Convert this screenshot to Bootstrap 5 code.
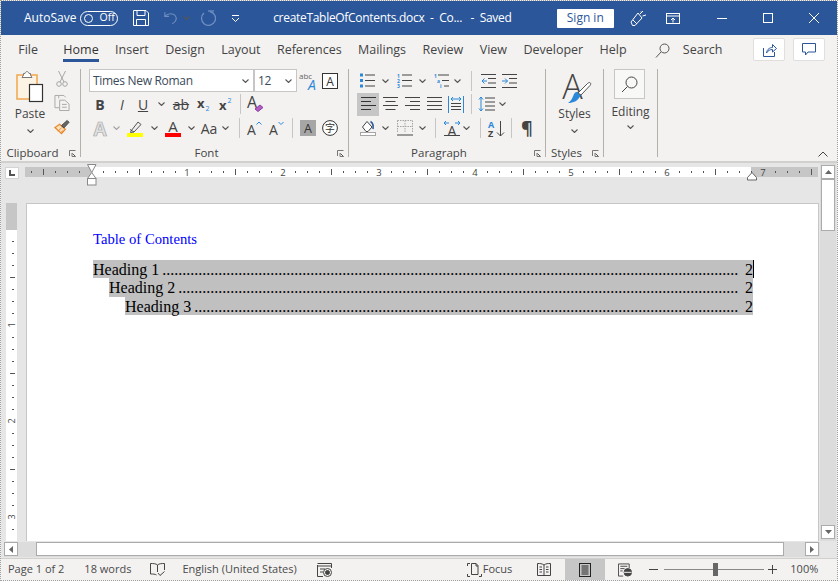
<!DOCTYPE html>
<html lang="en">

<head>
    <meta charset="UTF-8">
    <meta name="viewport" content="width=device-width, initial-scale=1.0">
    <title>createTableOfContents.docx - Word</title>
    <link href="https://cdn.jsdelivr.net/npm/bootstrap@5.3.2/dist/css/bootstrap.min.css" rel="stylesheet">
    <style>
        body {
            background: #f3f2f1;
            font-family: "Open Sans", "Noto Sans", sans-serif;
            font-size: 12px;
            color: #444;
        }

        .wd-app {
            height: 100vh;
            border: 1px dotted #a0a0a0;
            overflow: hidden;
        }

        /* fixed width cells, icons are centred inside */
        .rc {
            display: flex;
            align-items: center;
            justify-content: center;
            flex: none;
        }

        .w6 { width: 6px; } .w7 { width: 7px; } .w8 { width: 8px; } .w9 { width: 9px; } .w10 { width: 10px; }
        .w11 { width: 11px; } .w12 { width: 12px; } .w14 { width: 14px; } .w15 { width: 15px; } .w16 { width: 16px; }
        .w17 { width: 17px; } .w18 { width: 18px; } .w20 { width: 20px; } .w22 { width: 22px; } .w24 { width: 24px; }
        .w26 { width: 26px; } .w27 { width: 27px; } .w28 { width: 28px; } .w30 { width: 30px; } .w46 { width: 46px; }
        .w49 { width: 49px; }

        .wd-title {
            height: 34px;
            background: #2b579a;
            color: #fff;
            flex: none;
            padding-left: 23px;
            font-size: 12px;
        }

        .wd-autosave { width: 57px; }

        .wd-toggle {
            width: 38px;
            height: 15px;
            border: 1.5px solid #fff;
            border-radius: 8px;
            font-size: 10.5px;
            padding-left: 3px;
            gap: 6px;
        }

        .wd-toggle i {
            width: 9px;
            height: 9px;
            border: 1.5px solid #fff;
            border-radius: 50%;
        }

        .wd-docname {
            width: 286px;
            margin-left: 25px;
            white-space: pre;
            letter-spacing: -.3px;
        }

        .wd-signin {
            width: 58px;
            height: 19px;
            background: #fff;
            color: #2b579a;
            font-size: 12px;
            border-radius: 1px;
        }

        .wd-tabs {
            height: 27px;
            flex: none;
            padding-left: 9px;
            padding-right: 4px;
        }

        .wd-tabs .nav {
            align-self: stretch;
        }

        .wd-tabs .nav-link {
            padding: 3px 8.2px 0;
            color: #444;
            font-size: 12.5px;
            position: relative;
            line-height: 24px;
            height: 27px;
        }

        .wd-tabs .nav-link.active {
            color: #333;
            font-weight: 500;
        }

        .wd-tabs .nav-link.active::after {
            content: "";
            position: absolute;
            left: 8px;
            right: 8px;
            bottom: 0;
            height: 3px;
            background: #2b579a;
        }

        .wd-hometab { margin-left: 9px; }

        .wd-search {
            margin-left: 20px;
            margin-top: 3px;
            gap: 13px;
            font-size: 12.5px;
        }

        .wd-iconbtn {
            width: 32px;
            height: 23px;
            margin-top: 2px;
            background: #fff;
            border: 1px solid #e1dfdd;
            border-radius: 2px;
        }

        .wd-ribbon {
            height: 101px;
            flex: none;
            border-bottom: 2px solid #d2d0ce;
        }

        .wd-ribbon svg {
            overflow: visible;
        }

        .wd-group {
            height: 88px;
            margin-top: 7px;
            border-right: 1px solid #b3b0ad;
            flex: none;
        }

        .wd-clip { width: 80px; }
        .wd-font { width: 268px; }
        .wd-para { width: 197px; }
        .wd-styles { width: 58px; }
        .wd-edit { width: 54px; }

        .wd-grow {
            flex: 1 1 auto;
            min-height: 0;
        }

        .wd-pad { padding-left: 8px; }

        .wd-row { height: 24px; }
        .wd-row.wd-first { height: 23px; }

        .wd-glabel {
            height: 15px;
            margin-bottom: -4px;
            font-size: 11.5px;
            line-height: 14px;
            color: #444;
        }

        .wd-big { line-height: 14px; }

        .wd-pasteicon { margin: 2px 0 4px; }
        .wd-smalltools { padding-top: 2px; }
        .wd-stylesicon { margin: 4px 0 2px; }
        .wd-gap6 { margin-top: 6px; }

        .wd-fmt { font-size: 14px; }
        .wd-pilcrow { font-size: 18px; font-weight: 700; }

        .wd-combo {
            height: 23px;
            background: #fff;
            border: 1px solid #c8c6c4;
            font-size: 12px;
            letter-spacing: -.3px;
            color: #3b4a5a;
            padding: 0 4px 0 3px;
            flex: none;
            justify-content: space-between;
        }

        .wd-combo-name { width: 165px; }
        .wd-combo-size { width: 43px; }

        .wd-sel {
            background: #c6c6c6;
            height: 23px;
        }

        .wd-vsep {
            width: 1px;
            height: 20px;
            background: #c8c6c4;
        }

        .wd-findbox {
            width: 31px;
            height: 30px;
            border: 1px solid #c8c6c4;
            background: #f8f8f7;
            margin-left: 10px;
        }

        .wd-collapse {
            margin-left: 160px;
            margin-top: 89px;
        }

        .wd-doc {
            background: #e6e6e6;
            height: 395px;
            flex: none;
        }

        .wd-docmain {
            width: 819px;
            flex: none;
        }

        .wd-rulerrow {
            height: 40px;
            flex: none;
            padding: 4px 0 0 4px;
        }

        .wd-corner {
            width: 14px;
            height: 12px;
            background: #fff;
            border: 1px solid #d4d4d4;
            margin-right: 6px;
        }

        .wd-pagerow {
            flex: 1 1 auto;
            min-height: 0;
            overflow: hidden;
            padding-left: 5px;
            padding-right: 1px;
        }

        .wd-vruler {
            width: 11px;
            margin-top: -1px;
            flex: none;
        }

        .wd-page {
            margin-left: 9px;
            flex: 1 1 0;
            min-width: 0;
            background: #fff;
            border: 1px solid #c6c6c6;
            border-bottom: 0;
            padding: 26px 65px 0 66px;
            font-family: "Liberation Serif", serif;
            font-size: 16px;
            color: #000;
        }

        .wd-toctitle {
            color: #0000ff;
            font-size: 14.67px;
            line-height: 18px;
            margin-bottom: 12px;
        }

        .wd-tocline {
            height: 18.33px;
            line-height: 20px;
            background: #c0c0c0;
            white-space: nowrap;
        }

        .wd-lvl2 { margin-left: 16px; }
        .wd-lvl3 { margin-left: 32px; }

        .wd-dots {
            margin-left: 3px;
        }

        .wd-pageno {
            margin-left: auto;
        }

        .wd-caret {
            box-shadow: 1px 0 #000;
        }

        .wd-hscroll {
            height: 15px;
            flex: none;
            margin: 1px 0 1px 3px;
            width: 816px;
            background: #dcdcdc;
        }

        .wd-sbtn {
            width: 14px;
            height: 14px;
            background: #fff;
            border: 1px solid #ababab;
            flex: none;
        }

        .wd-hthumb {
            width: 748px;
            height: 14px;
            background: #fff;
            border: 1px solid #ababab;
            margin: 0 21px 0 18px;
        }

        .wd-vscroll {
            width: 16px;
            height: 378px;
            flex: none;
            background: #dcdcdc;
            padding: 2px 1px;
        }

        .wd-vthumb {
            width: 14px;
            height: 52px;
            background: #fff;
            border: 1px solid #ababab;
        }

        .wd-status {
            height: 22px;
            flex: none;
            padding-left: 7px;
            font-size: 11px;
            border-top: 1px solid #d2d0ce;
            color: #4a4a4a;
        }

        .wd-words { margin-left: 20px; }
        .wd-book { margin-left: 19px; }
        .wd-lang { margin-left: 17px; }
        .wd-macro { margin-left: 20px; }
        .wd-focus { margin-left: 135px; gap: 1px; }
        .wd-views { margin-left: 18px; }

        .wd-printcell {
            width: 40px;
            margin-left: 7px;
            background: #c6c6c6;
        }

        .wd-webview { margin-left: 13px; }
        .wd-minus { margin-left: 17px; }

        .wd-slider {
            width: 100px;
            height: 1px;
            background: #8a8886;
            margin: 0 4px 0 6px;
        }

        .wd-knob {
            width: 5px;
            height: 13px;
            margin-left: 3px;
            background: #666;
        }

        .wd-zoom { margin-left: 13px; }
    </style>
</head>

<body>
    <!-- shared glyphs -->
    <svg width="0" height="0" class="d-block">
        <defs>
            <symbol id="chev" viewBox="0 0 7 4"><path d="M.5.5 3.5 3.5 6.5.5" fill="none" stroke="#555" stroke-width="1.1"/></symbol>
            <symbol id="launch" viewBox="0 0 7 7"><path d="M.5 6V.5H6.5M6.5 6.5H3V3" fill="none" stroke="#777"/><path d="M3.5 3.5 6.5 6.5" stroke="#555"/></symbol>
            <pattern id="hticks" width="96" height="10" patternUnits="userSpaceOnUse" patternTransform="translate(66 0)">
                <rect x="12" y="4" width="1" height="2" fill="#555"/><rect x="24" y="4" width="1" height="2" fill="#555"/><rect x="36" y="4" width="1" height="2" fill="#555"/>
                <rect x="48" y="2" width="1" height="6" fill="#555"/>
                <rect x="60" y="4" width="1" height="2" fill="#555"/><rect x="72" y="4" width="1" height="2" fill="#555"/><rect x="84" y="4" width="1" height="2" fill="#555"/>
            </pattern>
            <pattern id="vticks" width="11" height="96" patternUnits="userSpaceOnUse" patternTransform="translate(0 27)">
                <rect x="6" y="12" width="2" height="1" fill="#555"/><rect x="6" y="24" width="2" height="1" fill="#555"/><rect x="6" y="36" width="2" height="1" fill="#555"/>
                <rect x="4" y="48" width="5" height="1" fill="#555"/>
                <rect x="6" y="60" width="2" height="1" fill="#555"/><rect x="6" y="72" width="2" height="1" fill="#555"/><rect x="6" y="84" width="2" height="1" fill="#555"/>
            </pattern>
        </defs>
    </svg>

    <div class="wd-app d-flex flex-column">
        <!-- title bar -->
        <div class="wd-title d-flex align-items-center">
            <span class="wd-autosave">AutoSave</span>
            <span class="wd-toggle d-flex align-items-center flex-none"><i></i>Off</span>
            <span class="rc w46">
                <svg width="16" height="16" viewBox="0 0 16 16" fill="none" stroke="#fff"><path d="M.5.5H13L15.5 3V15.5H.5Z"/><path d="M4 .5V5.5H12V.5M3.5 15.5V9.5H12.5V15.5"/></svg>
            </span>
            <span class="rc w14">
                <svg width="17" height="16" viewBox="0 0 17 16" fill="none" stroke="#6f8fc0" stroke-width="1.3"><path d="M1 1V6H6"/><path d="M1.5 5.5C5 2 11 2 13.5 5S15 12.5 10 15"/></svg>
            </span>
            <span class="rc w16"><svg width="7" height="4"><use href="#chev"/></svg></span>
            <span class="rc w28">
                <svg width="16" height="16" viewBox="0 0 16 16" fill="none" stroke="#6f8fc0" stroke-width="1.3"><path d="M10 1.5A7 7 0 1 1 4 3"/><path d="M8 1H14"/></svg>
            </span>
            <span class="rc w26">
                <svg width="9" height="7" viewBox="0 0 9 7" fill="none" stroke="#fff"><path d="M1 .5H8"/><path d="M1 3 4.5 6.5 8 3"/></svg>
            </span>
            <span class="wd-docname">createTableOfContents.docx  -  Co...   -  Saved</span>
            <span class="wd-signin d-flex align-items-center justify-content-center">Sign in</span>
            <span class="rc w49">
                <svg width="17" height="17" viewBox="0 0 17 17" fill="none" stroke="#fff"><path d="M1 12 8 3 12 8 5 15.5H2.5Z"/><path d="M3 10 7 14M10 4 13 1M12.5 6 16 5M11 1.5 11.5 3"/></svg>
            </span>
            <span class="rc w20">
                <svg width="14" height="11" viewBox="0 0 14 11" fill="none" stroke="#fff"><rect x=".5" y=".5" width="13" height="10"/><path d="M.5 3H13.5M7 9.5V5M5 7 7 5 9 7"/></svg>
            </span>
            <span class="rc w46 ms-3">
                <svg width="10" height="10" viewBox="0 0 10 10" stroke="#fff"><path d="M0 5.5H10"/></svg>
            </span>
            <span class="rc w46">
                <svg width="10" height="10" viewBox="0 0 10 10" fill="none" stroke="#fff"><rect x=".5" y=".5" width="9" height="9"/></svg>
            </span>
            <span class="rc w46">
                <svg width="10" height="10" viewBox="0 0 10 10" fill="none" stroke="#fff"><path d="M0 0 10 10M10 0 0 10"/></svg>
            </span>
        </div>

        <!-- tabs -->
        <div class="wd-tabs d-flex align-items-center">
            <ul class="nav">
                <li class="nav-item"><a class="nav-link" href="#">File</a></li>
                <li class="nav-item wd-hometab"><a class="nav-link active" href="#">Home</a></li>
                <li class="nav-item"><a class="nav-link" href="#">Insert</a></li>
                <li class="nav-item"><a class="nav-link" href="#">Design</a></li>
                <li class="nav-item"><a class="nav-link" href="#">Layout</a></li>
                <li class="nav-item"><a class="nav-link" href="#">References</a></li>
                <li class="nav-item"><a class="nav-link" href="#">Mailings</a></li>
                <li class="nav-item"><a class="nav-link" href="#">Review</a></li>
                <li class="nav-item"><a class="nav-link" href="#">View</a></li>
                <li class="nav-item"><a class="nav-link" href="#">Developer</a></li>
                <li class="nav-item"><a class="nav-link" href="#">Help</a></li>
            </ul>
            <div class="wd-search d-flex align-items-center">
                <svg width="15" height="15" viewBox="0 0 15 15" fill="none" stroke="#555"><circle cx="9.5" cy="5.5" r="4.5"/><path d="M6 9 1 14.5"/></svg>
                Search
            </div>
            <div class="wd-iconbtn d-flex align-items-center justify-content-center ms-auto">
                <svg width="15" height="14" viewBox="0 0 15 14" fill="none" stroke="#2b579a"><path d="M1.5 5V13.5H12.5V9"/><path d="M4.5 10C5 6 8 4.5 10.5 4.5V1.5L14.5 5.5 10.5 9V6.5C8 6.5 6 7.5 4.5 10Z"/></svg>
            </div>
            <div class="wd-iconbtn d-flex align-items-center justify-content-center ms-2 me-2">
                <svg width="14" height="13" viewBox="0 0 14 13" fill="none" stroke="#2b579a"><path d="M.5.5H13.5V9H6L3.5 12V9H.5Z"/></svg>
            </div>
        </div>

        <!-- ribbon -->
        <div class="wd-ribbon d-flex">
            <div class="wd-group wd-clip d-flex flex-column">
                <div class="d-flex wd-grow ps-2">
                    <div class="w46 d-flex flex-column align-items-center pe-1 wd-big">
                        <svg class="wd-pasteicon" width="28" height="32" viewBox="0 0 28 32">
                            <rect x="1" y="4" width="20" height="24" fill="#fdf3e4" stroke="#f2ab55" stroke-width="1.6"/>
                            <path d="M7.5 4V2.5H9C9.5 0 12.5 0 13 2.5H14.5V4L16 6.5H6Z" fill="#fff" stroke="#777"/>
                            <rect x="13.5" y="13.5" width="13" height="17" fill="#fff" stroke="#333" stroke-width="1.2"/>
                        </svg>
                        <span>Paste</span>
                        <svg class="mt-2" width="7" height="4"><use href="#chev"/></svg>
                    </div>
                    <div class="d-flex flex-column align-items-center w14 wd-smalltools gap-2">
                        <svg class="flex-none" width="12" height="16" viewBox="0 0 12 16" fill="none" stroke="#a6a6a6"><path d="M2.5 0 8 11M9.5 0 4 11"/><circle cx="3" cy="13" r="2.3"/><circle cx="9" cy="13" r="2.3"/></svg>
                        <svg class="flex-none" width="16" height="16" viewBox="0 0 16 17" fill="none" stroke="#a6a6a6"><path d="M4.5 3.5V.5H10L12 2.5"/><path d="M.5 .5H4.5M.5 .5V13.5H5"/><path d="M5.5 5.5H11L15.5 9.5V16.5H5.5Z"/><path d="M8 10H13M8 13H13"/></svg>
                        <svg class="flex-none" width="16" height="16" viewBox="0 0 17 17"><path d="M8 15.5 1 9 6 5.500 12 11Z" fill="#fce0bb" stroke="#e8872a" stroke-width="1.3"/><path d="M4 13 8 9.500M6.500 15 10 12" stroke="#e8872a"/><path d="M8 7 14 1.500 16 3.500 10.500 9.500Z" fill="#666" stroke="#444"/></svg>
                    </div>
                </div>
                <div class="wd-glabel d-flex">
                    <span class="flex-grow-1 text-center">Clipboard</span>
                    <span class="rc w16"><svg width="7" height="7"><use href="#launch"/></svg></span>
                </div>
            </div>

            <div class="wd-group wd-font d-flex flex-column">
                <div class="wd-pad wd-grow">
                    <div class="wd-row wd-first d-flex align-items-center">
                        <div class="wd-combo wd-combo-name d-flex align-items-center">Times New Roman<svg width="7" height="4"><use href="#chev"/></svg></div>
                        <div class="wd-combo wd-combo-size d-flex align-items-center">12<svg width="7" height="4"><use href="#chev"/></svg></div>
                        <span class="rc w22">
                            <svg width="19" height="20" viewBox="0 0 19 20"><text x="0" y="8" font-size="8" fill="#666">abc</text><text x="9" y="19" font-size="14" font-style="italic" fill="#2b88d8">A</text></svg>
                        </span>
                        <span class="rc w22">
                            <svg width="16" height="16" viewBox="0 0 16 16"><rect x=".5" y=".5" width="15" height="15" fill="#fff" stroke="#333"/><text x="8" y="12.5" font-size="12" text-anchor="middle" fill="#333">A</text></svg>
                        </span>
                    </div>
                    <div class="wd-row d-flex align-items-center">
                        <span class="rc w22 wd-fmt"><b>B</b></span>
                        <span class="rc w22 wd-fmt"><i>I</i></span>
                        <span class="rc w20 wd-fmt"><u>U</u></span>
                        <span class="rc w16"><svg width="7" height="4"><use href="#chev"/></svg></span>
                        <span class="rc w24 wd-fmt"><s>ab</s></span>
                        <span class="rc w22">
                            <svg width="14" height="15" viewBox="0 0 14 15"><text x="0" y="11" font-size="13" font-weight="700" fill="#444">x</text><text x="8.500" y="14" font-size="7" fill="#2b88d8">2</text></svg>
                        </span>
                        <span class="rc w22">
                            <svg width="14" height="15" viewBox="0 0 14 15"><text x="0" y="13" font-size="13" font-weight="700" fill="#444">x</text><text x="8.500" y="6" font-size="7" fill="#2b88d8">2</text></svg>
                        </span>
                        <span class="rc w6"><i class="wd-vsep"></i></span>
                        <span class="rc w24">
                            <svg width="17" height="18" viewBox="0 0 17 18"><text x="0" y="13" font-size="16" fill="#444">A</text><path d="M8 14 13 10 16 12.5 11 16.5Z" fill="#b25fc4" stroke="#8e3aa8"/></svg>
                        </span>
                    </div>
                    <div class="wd-row d-flex align-items-center">
                        <span class="rc w22">
                            <svg width="16" height="15" viewBox="0 0 16 15"><text x="8" y="14.500" font-size="19" font-weight="700" text-anchor="middle" fill="#e0e0e0" stroke="#a6a6a6" stroke-width=".7">A</text></svg>
                        </span>
                        <span class="rc w11"><svg width="7" height="4" opacity=".5"><use href="#chev"/></svg></span>
                        <span class="rc w26">
                            <svg width="16" height="17" viewBox="0 0 16 17"><path d="M4 11 11 2 14 4.5 7 12 3.5 12.5Z" fill="#eee" stroke="#555"/><path d="M3 9.5 7 12" stroke="#555"/><rect y="13" width="16" height="4" fill="#ffff00"/></svg>
                        </span>
                        <span class="rc w12"><svg width="7" height="4"><use href="#chev"/></svg></span>
                        <span class="rc w26">
                            <svg width="16" height="17" viewBox="0 0 16 17"><text x="8" y="12" font-size="15" text-anchor="middle" fill="#444">A</text><rect y="13" width="16" height="4" fill="#ff0000"/></svg>
                        </span>
                        <span class="rc w10"><svg width="7" height="4"><use href="#chev"/></svg></span>
                        <span class="rc w26 wd-fmt">Aa</span>
                        <span class="rc w7"><svg width="7" height="4"><use href="#chev"/></svg></span>
                        <span class="rc w7"></span>
                        <span class="rc w6"><i class="wd-vsep"></i></span>
                        <span class="rc w26">
                            <svg width="14" height="14" viewBox="0 0 14 14"><text x="-1" y="13.500" font-size="14" fill="#444">A</text><path d="M8.5 3.5 11 1 13.5 3.5" fill="none" stroke="#2b88d8"/></svg>
                        </span>
                        <span class="rc w18">
                            <svg width="14" height="14" viewBox="0 0 14 14"><text x="-1" y="13.500" font-size="14" fill="#444">A</text><path d="M8.5 1 11 3.5 13.5 1" fill="none" stroke="#2b88d8"/></svg>
                        </span>
                        <span class="rc w12"><i class="wd-vsep"></i></span>
                        <span class="rc w20">
                            <svg width="16" height="16" viewBox="0 0 16 16"><rect width="16" height="16" fill="#a6a6a6"/><text x="8" y="12.5" font-size="12.5" text-anchor="middle" fill="#333">A</text></svg>
                        </span>
                        <span class="rc w24">
                            <svg width="16" height="16" viewBox="0 0 16 16"><circle cx="8" cy="8" r="7.4" fill="#fff" stroke="#333"/><text x="8" y="11.5" font-size="10" text-anchor="middle" fill="#333" font-family="Noto Sans CJK SC">字</text></svg>
                        </span>
                    </div>
                </div>
                <div class="wd-glabel d-flex">
                    <span class="flex-grow-1 text-center">Font</span>
                    <span class="rc w16"><svg width="7" height="7"><use href="#launch"/></svg></span>
                </div>
            </div>

            <div class="wd-group wd-para d-flex flex-column">
                <div class="wd-pad wd-grow">
                    <div class="wd-row wd-first d-flex align-items-center">
                        <span class="rc w22">
                            <svg width="16" height="15" viewBox="0 0 16 15"><path d="M0 .5H3V3.5H0ZM0 6H3V9H0ZM0 11.5H3V14.5H0Z" fill="#2b88d8"/><path d="M5 2H15M5 7.5H15M5 13H15" stroke="#444"/></svg>
                        </span>
                        <span class="rc w12"><svg width="7" height="4"><use href="#chev"/></svg></span>
                        <span class="rc w27">
                            <svg width="16" height="15" viewBox="0 0 16 15"><text font-size="5" font-weight="700" fill="#2b88d8"><tspan x="0" y="4.500">1</tspan><tspan x="0" y="9.500">2</tspan><tspan x="0" y="14.500">3</tspan></text><path d="M5 2H15M5 7.5H15M5 13H15" stroke="#444"/></svg>
                        </span>
                        <span class="rc w8"><svg width="7" height="4"><use href="#chev"/></svg></span>
                        <span class="rc w15 ms-2">
                            <svg width="15" height="15" viewBox="0 0 15 15"><text font-size="5" font-weight="700" fill="#2b88d8"><tspan x="0" y="4.500">1</tspan><tspan x="3" y="9.500">a</tspan><tspan x="6" y="14.500">i</tspan></text><path d="M4 2H15M8 7.5H15M10 13H15" stroke="#444"/></svg>
                        </span>
                        <span class="rc w16"><svg width="7" height="4"><use href="#chev"/></svg></span>
                        <span class="rc w12"><i class="wd-vsep"></i></span>
                        <span class="rc w22">
                            <svg width="15" height="14" viewBox="0 0 15 14"><path d="M0 .5H15M7 4.5H15M7 9H15M0 13.5H15" stroke="#444"/><path d="M6 7H1M3.5 4.5 1 7 3.5 9.5" fill="none" stroke="#2b88d8"/></svg>
                        </span>
                        <span class="rc w20">
                            <svg width="15" height="14" viewBox="0 0 15 14"><path d="M0 .5H15M7 4.5H15M7 9H15M0 13.5H15" stroke="#444"/><path d="M0 7H5.5M3 4.5 5.5 7 3 9.5" fill="none" stroke="#2b88d8"/></svg>
                        </span>
                    </div>
                    <div class="wd-row d-flex align-items-center">
                        <span class="rc w22 wd-sel">
                            <svg width="15" height="14" viewBox="0 0 15 14" stroke="#333"><path d="M0 .5H15M0 4.5H10M0 8.5H15M0 12.5H10"/></svg>
                        </span>
                        <span class="rc w22">
                            <svg width="15" height="14" viewBox="0 0 15 14" stroke="#444"><path d="M0 .5H15M2.5 4.5H12.5M0 8.5H15M2.5 12.5H12.5"/></svg>
                        </span>
                        <span class="rc w22">
                            <svg width="15" height="14" viewBox="0 0 15 14" stroke="#444"><path d="M0 .5H15M5 4.5H15M0 8.5H15M5 12.5H15"/></svg>
                        </span>
                        <span class="rc w22">
                            <svg width="15" height="14" viewBox="0 0 15 14" stroke="#444"><path d="M0 .5H15M0 4.5H15M0 8.5H15M0 12.5H15"/></svg>
                        </span>
                        <span class="rc w22">
                            <svg width="16" height="17" viewBox="0 0 16 17" fill="none"><path d="M.5 0V17M15.5 0V17" stroke="#2b88d8"/><path d="M3 3H13M5 1 3 3 5 5M11 1 13 3 11 5" stroke="#2b88d8"/><path d="M3 7.5H13M3 10.5H13M3 13.5H13" stroke="#444"/></svg>
                        </span>
                        <span class="rc w8"><i class="wd-vsep"></i></span>
                        <span class="rc w22">
                            <svg width="17" height="16" viewBox="0 0 17 16" fill="none"><path d="M3 1V15M1 3.5 3 1 5 3.5M1 12.5 3 15 5 12.5" stroke="#2b88d8"/><path d="M7 2H17M7 6H17M7 10H17M7 14H17" stroke="#444"/></svg>
                        </span>
                        <span class="rc w10"><svg width="7" height="4"><use href="#chev"/></svg></span>
                    </div>
                    <div class="wd-row d-flex align-items-center">
                        <span class="rc w22">
                            <svg width="16" height="16" viewBox="0 0 16 16" fill="none"><path d="M2.5 7 7 1.5 12 7 8 11.5H6Z" fill="#fff" stroke="#444"/><path d="M10.5 1.5C13 3 13.5 6 13 9" stroke="#2b579a" stroke-width="1.6"/><rect x=".5" y="12.5" width="15" height="3" fill="#fff" stroke="#a6a6a6"/></svg>
                        </span>
                        <span class="rc w12"><svg width="7" height="4"><use href="#chev"/></svg></span>
                        <span class="rc w27">
                            <svg width="16" height="16" viewBox="0 0 16 16" fill="none"><path d="M.5.5H15.5V12M.5.5V12M8 .5V12M.5 6.5H15.5" stroke="#a6a6a6" stroke-dasharray="1.5 1"/><path d="M0 15H16" stroke="#444"/></svg>
                        </span>
                        <span class="rc w8"><svg width="7" height="4"><use href="#chev"/></svg></span>
                        <span class="rc w18"><i class="wd-vsep"></i></span>
                        <span class="rc w16">
                            <svg width="18" height="16" viewBox="0 0 18 16"><text x="9" y="15.500" font-size="14" text-anchor="middle" fill="#444">A</text><path d="M1 3H6M3 1 1 3 3 5M12 3H17M15 1 17 3 15 5" fill="none" stroke="#2b88d8"/><path d="M1 15.500H17" stroke="#444"/></svg>
                        </span>
                        <span class="rc w12"><svg width="7" height="4"><use href="#chev"/></svg></span>
                        <span class="rc w16"><i class="wd-vsep"></i></span>
                        <span class="rc w17">
                            <svg width="17" height="17" viewBox="0 0 17 17"><text font-size="9" font-weight="700"><tspan x="0" y="8" fill="#2b88d8">A</tspan><tspan x="0" y="17" fill="#444">Z</tspan></text><path d="M12.5 1V16M9 12.5 12.5 16 16 12.5" fill="none" stroke="#444"/></svg>
                        </span>
                        <span class="rc w12"><i class="wd-vsep"></i></span>
                        <span class="rc w20 wd-pilcrow">¶</span>
                    </div>
                </div>
                <div class="wd-glabel d-flex">
                    <span class="flex-grow-1 text-center">Paragraph</span>
                    <span class="rc w16"><svg width="7" height="7"><use href="#launch"/></svg></span>
                </div>
            </div>

            <div class="wd-group wd-styles d-flex flex-column">
                <div class="wd-grow d-flex flex-column align-items-center wd-big">
                    <svg class="wd-stylesicon" width="32" height="32" viewBox="0 0 32 32">
                        <text x="13.500" y="26" font-size="34" font-weight="300" text-anchor="middle" fill="#444">A</text>
                        <path d="M15 21C17 18 20 18 22 21 20 28 14 30 9 30 12 28 13 26 15 21Z" fill="#2b88d8"/>
                        <path d="M19 20 28.500 10.500C30.500 8.500 33 10 31 12.500L22 22Z" fill="#fff" stroke="#555"/>
                    </svg>
                    <span>Styles</span>
                    <svg class="mt-2" width="7" height="4"><use href="#chev"/></svg>
                </div>
                <div class="wd-glabel d-flex">
                    <span class="flex-grow-1 text-center">Styles</span>
                    <span class="rc w16"><svg width="7" height="7"><use href="#launch"/></svg></span>
                </div>
            </div>

            <div class="wd-group wd-edit d-flex flex-column align-items-start">
                <div class="wd-findbox d-flex align-items-center justify-content-center">
                    <svg width="17" height="17" viewBox="0 0 17 17" fill="none" stroke="#444"><circle cx="10.5" cy="6.5" r="5.5"/><path d="M6.5 10.5 1 16"/></svg>
                </div>
                <div class="w-100 text-center wd-gap6 wd-big">Editing</div>
                <div class="w-100 text-center lh-1 wd-gap6"><svg class="d-inline-block align-top" width="7" height="4"><use href="#chev"/></svg></div>
            </div>

            <div class="wd-collapse">
                <svg class="d-block" width="10" height="6" viewBox="0 0 10 6" fill="none" stroke="#444"><path d="M.5 5.5 5 1 9.5 5.5"/></svg>
            </div>
        </div>

        <!-- document area -->
        <div class="wd-doc d-flex">
            <div class="wd-docmain d-flex flex-column">
                <div class="wd-rulerrow d-flex align-items-start">
                    <div class="wd-corner d-flex align-items-center justify-content-center">
                        <svg width="6" height="6" viewBox="0 0 6 6"><path d="M0 0H2V4H6V6H0Z" fill="#555"/></svg>
                    </div>
                    <svg class="overflow-visible" width="793" height="10" viewBox="0 0 793 10">
                        <rect width="793" height="10" fill="#c6c6c6"/>
                        <rect x="66" width="660" height="10" fill="#fff"/>
                        <rect width="793" height="10" fill="url(#hticks)"/>
                        <g font-size="9.5" text-anchor="middle" fill="#444">
                            <text x="162" y="8.5">1</text><text x="258" y="8.5">2</text><text x="354" y="8.5">3</text><text x="450" y="8.5">4</text><text x="546" y="8.5">5</text><text x="642" y="8.5">6</text><text x="738" y="8.5">7</text>
                        </g>
                        <path d="M62.5-2.5H71L66.750 5.500Z" fill="#fff" stroke="#888"/>
                        <path d="M66.750 5.500 71 11.500H62.500Z" fill="#fff" stroke="#888"/>
                        <rect x="62.500" y="11.500" width="8.500" height="6.500" fill="#fff" stroke="#888"/>
                        <path d="M727 5.500 731.500 10.500V13H722.500V10.500Z" fill="#fff" stroke="#666"/>
                    </svg>
                </div>
                <div class="wd-pagerow d-flex">
                    <svg class="wd-vruler" width="11" height="340" viewBox="0 0 11 340">
                        <rect width="11" height="28" fill="#c6c6c6"/>
                        <rect y="28" width="11" height="312" fill="#fff"/>
                        <rect y="28" width="11" height="312" fill="url(#vticks)"/>
                        <g font-size="9" text-anchor="middle" fill="#444">
                            <text transform="translate(9 123) rotate(-90)">1</text>
                            <text transform="translate(9 219) rotate(-90)">2</text>
                            <text transform="translate(9 315) rotate(-90)">3</text>
                        </g>
                    </svg>
                    <div class="wd-page">
                        <p class="wd-toctitle">Table of Contents</p>
                        <div class="wd-tocline d-flex">
                            <span>Heading 1</span><span class="wd-dots">................................................................................................................................................</span><span class="wd-pageno wd-caret">2</span>
                        </div>
                        <div class="wd-tocline wd-lvl2 d-flex">
                            <span>Heading 2</span><span class="wd-dots">............................................................................................................................................</span><span class="wd-pageno">2</span>
                        </div>
                        <div class="wd-tocline wd-lvl3 d-flex">
                            <span>Heading 3</span><span class="wd-dots">........................................................................................................................................</span><span class="wd-pageno">2</span>
                        </div>
                    </div>
                </div>
                <div class="wd-hscroll d-flex">
                    <div class="wd-sbtn d-flex align-items-center justify-content-center">
                        <svg width="4" height="7" viewBox="0 0 4 7"><path d="M4 0V7L0 3.500Z" fill="#666"/></svg>
                    </div>
                    <div class="wd-hthumb"></div>
                    <div class="wd-sbtn d-flex align-items-center justify-content-center">
                        <svg width="4" height="7" viewBox="0 0 4 7"><path d="M0 0V7L4 3.500Z" fill="#666"/></svg>
                    </div>
                </div>
            </div>
            <div class="wd-vscroll d-flex flex-column">
                <div class="wd-sbtn d-flex align-items-center justify-content-center">
                    <svg width="7" height="4" viewBox="0 0 7 4"><path d="M0 4H7L3.500 0Z" fill="#666"/></svg>
                </div>
                <div class="wd-vthumb"></div>
                <div class="wd-sbtn d-flex align-items-center justify-content-center mt-auto">
                    <svg width="7" height="4" viewBox="0 0 7 4"><path d="M0 0H7L3.500 4Z" fill="#666"/></svg>
                </div>
            </div>
        </div>

        <!-- status bar -->
        <div class="wd-status d-flex align-items-center">
            <span>Page 1 of 2</span>
            <span class="wd-words">18 words</span>
            <span class="wd-book d-flex">
                <svg width="15" height="13" viewBox="0 0 15 13" fill="none" stroke="#444"><path d="M7.500 2C6 .5 3 .5 .5 .5V11C3 11 5 11 6.500 12"/><path d="M7.500 2C9 .5 12 .5 14.500 .5V7M7.500 2V9"/><path d="M8 10 10 12.500 14.500 8.500"/></svg>
            </span>
            <span class="wd-lang">English (United States)</span>
            <span class="wd-macro d-flex">
                <svg width="15" height="14" viewBox="0 0 15 14" fill="none" stroke="#444"><path d="M.5 2V13.500H6M.5 .5H14.500V5M.5 3H14.500M3 6H8M3 9H6"/><circle cx="10.500" cy="9.500" r="4"/><circle cx="10.500" cy="9.500" r="2" fill="#444"/></svg>
            </span>
            <span class="wd-focus d-flex align-items-center">
                <svg width="15" height="14" viewBox="0 0 15 14" fill="none" stroke="#444"><path d="M.5 3V.5H3M.5 11V13.500H3M14.500 11V13.500H12M4.500 11.500V.5H9L11 2.500V11.500ZM9 .5V3H11"/></svg>
                Focus
            </span>
            <span class="rc w28 wd-views">
                <svg width="14" height="13" viewBox="0 0 14 13" fill="none" stroke="#444"><path d="M7 2C5 .5 3 .5 .5 .5V12.500H7H13.500V.5C11 .5 9 .5 7 2V12.500M2.500 4H5M2.500 6.500H5M2.500 9H5M9 4H11.500M9 6.500H11.500M9 9H11.500"/></svg>
            </span>
            <span class="rc wd-printcell h-100">
                <svg width="12" height="14" viewBox="0 0 12 14" fill="none" stroke="#222"><rect x=".5" y=".5" width="11" height="13"/><path d="M2.500 3H9.500M2.500 5H9.500M2.500 7H9.500M2.500 9H9.500M2.500 11H9.500"/></svg>
            </span>
            <span class="rc w14 wd-webview">
                <svg width="15" height="14" viewBox="0 0 15 14" fill="none" stroke="#444"><path d="M5.500 13.500H.5V.5H12V5M2.500 3H10M2.500 5.500H7M2.500 8H5"/><circle cx="10.500" cy="9.500" r="4" fill="#444"/><path d="M6.500 9.500H14.500" stroke="#fff"/></svg>
            </span>
            <span class="wd-minus d-flex align-items-center">
                <svg width="9" height="1" class="d-block"><rect width="9" height="1" fill="#444"/></svg>
            </span>
            <div class="wd-slider d-flex align-items-center justify-content-center"><i class="wd-knob flex-none"></i></div>
            <svg width="9" height="9" viewBox="0 0 9 9" stroke="#444"><path d="M0 4.500H9M4.500 0V9"/></svg>
            <span class="wd-zoom">100%</span>
        </div>
    </div>
    <script src="https://cdn.jsdelivr.net/npm/bootstrap@5.3.2/dist/js/bootstrap.bundle.min.js"></script>
</body>

</html>
